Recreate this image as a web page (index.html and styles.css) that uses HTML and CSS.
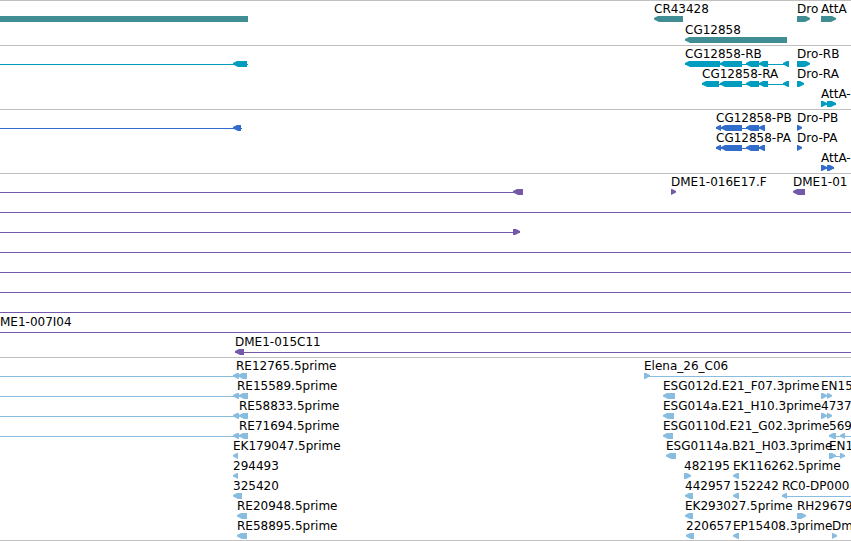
FILE: index.html
```
<!DOCTYPE html>
<html lang="en">
<head>
<meta charset="utf-8">
<title>Genome map</title>
<link rel="stylesheet" href="styles.css">
</head>
<body>
<main class="map" id="map"></main>
<script src="map.js"></script>
</body>
</html>
```
FILE: styles.css
```
* { box-sizing: border-box; }

body {
  margin: 0;
  background: #fff;
  color: #000;
  font-family: "DejaVu Sans", sans-serif;
  font-size: 12px;
  line-height: 16px;
}

.map {
  overflow: hidden;
  border-bottom: 1px solid #c0c0c0;
}

.track {
  border-top: 1px solid #c0c0c0;
  padding-bottom: 3px;
}

.track:first-child,
.track:last-child { padding-bottom: 2px; }

.row {
  position: relative;
  height: 20px;
}

.gene .row { height: 21px; }

.gene { color: #408e94; }
.transcript { color: #009dbf; }
.protein { color: #336dcc; }
.clone { color: #7459aa; }
.est { color: #88bddf; }

.glyphs {
  position: absolute;
  inset: 0;
  width: 100%;
  height: 100%;
  overflow: visible;
  fill: currentColor;
}

.glyphs rect { shape-rendering: crispEdges; }

.label {
  position: absolute;
  top: 0;
  color: #000;
  white-space: nowrap;
}
```
FILE: map.js
```
// Each row: labels [x, text], glyphs [kind, start, end].
// Kinds: L / R = arrow pointing left / right, B = plain bar, I = thin line.
const END = 6000;
const full = { glyphs: [["I", 0, END]] };
const tracks = [
  { type: "gene", rows: [
    { labels: [[654, "CR43428"], [797, "Dro"], [821, "AttA"]],
      glyphs: [["B", 0, 248], ["L", 654, 683], ["R", 797, 810], ["R", 821, 836]] },
    { labels: [[685, "CG12858"]], glyphs: [["L", 685, 787]] }
  ] },
  { type: "transcript", rows: [
    { labels: [[685, "CG12858-RB"], [797, "Dro-RB"]],
      glyphs: [["I", 0, 248], ["L", 233, 247], ["I", 685, 789], ["L", 685, 720], ["L", 720, 742], ["L", 746, 759], ["L", 759, 768], ["L", 783, 789], ["R", 797, 810]] },
    { labels: [[702, "CG12858-RA"], [797, "Dro-RA"]],
      glyphs: [["I", 702, 789], ["L", 702, 719], ["L", 720, 742], ["L", 746, 759], ["L", 759, 768], ["L", 783, 789], ["R", 797, 804]] },
    { labels: [[821, "AttA-"]], glyphs: [["I", 821, 836], ["R", 821, 827], ["R", 827, 836]] }
  ] },
  { type: "protein", rows: [
    { labels: [[716, "CG12858-PB"], [797, "Dro-PB"]],
      glyphs: [["I", 0, 242], ["L", 233, 241], ["I", 716, 765], ["L", 716, 721], ["L", 721, 742], ["L", 746, 759], ["L", 759, 765], ["R", 797, 802]] },
    { labels: [[716, "CG12858-PA"], [797, "Dro-PA"]],
      glyphs: [["I", 716, 765], ["L", 716, 721], ["L", 721, 742], ["L", 746, 759], ["L", 759, 765], ["R", 797, 802]] },
    { labels: [[821, "AttA-"]], glyphs: [["I", 821, 834], ["R", 821, 827], ["R", 827, 834]] }
  ] },
  { type: "clone", rows: [
    { labels: [[671, "DME1-016E17.F"], [793, "DME1-01"]],
      glyphs: [["I", 0, 523], ["L", 513, 523], ["R", 671, 676], ["L", 793, 805]] },
    full,
    { glyphs: [["I", 0, 520], ["R", 513, 520]] },
    full, full, full, full,
    { labels: [[0, "ME1-007I04"]], glyphs: full.glyphs },
    { labels: [[235, "DME1-015C11"]], glyphs: [["I", 235, END], ["L", 235, 244]] }
  ] },
  { type: "est", rows: [
    { labels: [[236, "RE12765.5prime"], [644, "Elena_26_C06"]],
      glyphs: [["I", 0, 247], ["L", 233, 239], ["L", 238, 247], ["I", 644, END], ["R", 644, 650]] },
    { labels: [[237, "RE15589.5prime"], [663, "ESG012d.E21_F07.3prime"], [821, "EN15"]],
      glyphs: [["I", 0, 248], ["L", 233, 239], ["L", 239, 248], ["L", 663, 675], ["R", 821, 827], ["R", 827, 832]] },
    { labels: [[239, "RE58833.5prime"], [663, "ESG014a.E21_H10.3prime"], [821, "4737"]],
      glyphs: [["I", 0, 248], ["L", 233, 239], ["L", 239, 248], ["L", 663, 674], ["R", 821, 827], ["R", 827, 832]] },
    { labels: [[239, "RE71694.5prime"], [663, "ESG0110d.E21_G02.3prime"], [829, "569"]],
      glyphs: [["I", 0, 248], ["L", 233, 239], ["L", 239, 248], ["L", 663, 673], ["I", 829, END], ["L", 829, 836], ["L", 840, 845]] },
    { labels: [[233, "EK179047.5prime"], [666, "ESG0114a.B21_H03.3prime"], [829, "EN1"]],
      glyphs: [["L", 233, 238], ["L", 666, 676], ["I", 829, 845], ["R", 829, 836], ["R", 840, 845]] },
    { labels: [[233, "294493"], [684, "482195"], [733, "EK116262.5prime"]],
      glyphs: [["L", 233, 238], ["R", 684, 691], ["L", 733, 739]] },
    { labels: [[233, "325420"], [685, "442957"], [733, "152242"], [782, "RC0-DP000"]],
      glyphs: [["L", 233, 242], ["L", 685, 693], ["L", 733, 739], ["I", 782, END], ["L", 782, 787]] },
    { labels: [[237, "RE20948.5prime"], [685, "EK293027.5prime"], [797, "RH29679"]],
      glyphs: [["L", 237, 247], ["L", 685, 693], ["R", 797, 806]] },
    { labels: [[237, "RE58895.5prime"], [686, "220657"], [733, "EP15408.3prime"], [832, "Dm"]],
      glyphs: [["L", 237, 247], ["L", 686, 694], ["L", 733, 739], ["R", 832, 837]] }
  ] }
];

// Arrow heads bulge slightly and taper to a blunt tip.
function arrow(tip, tail, dir) {
  const at = n => tip + dir * n;
  return `<path d="M${tip} 17L${at(4)} 15H${tail}V21H${at(5)}L${at(2)} 19.5L${tip} 18.5Z"/>`;
}

function shape([kind, a, b]) {
  if (kind === "I") return `<rect x="${a}" y="18" width="${b - a}" height="1"/>`;
  if (kind === "B") return `<rect x="${a}" y="15" width="${b - a}" height="6"/>`;
  return kind === "L" ? arrow(a, b, 1) : arrow(b, a, -1);
}

document.getElementById("map").innerHTML = tracks.map(track =>
  `<section class="track ${track.type}">` + track.rows.map(row =>
    `<div class="row"><svg class="glyphs" aria-hidden="true">${row.glyphs.map(shape).join("")}</svg>` +
    (row.labels || []).map(([x, text]) => `<span class="label" style="left:${x}px">${text}</span>`).join("") +
    `</div>`).join("") +
  `</section>`).join("");
```
